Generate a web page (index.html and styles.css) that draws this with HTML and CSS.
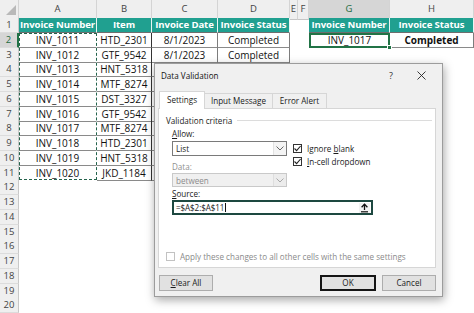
FILE: index.html
```html
<!DOCTYPE html>
<html>
<head>
<meta charset="utf-8">
<link rel="stylesheet" href="styles.css">
</head>
<body>
<div class="sheet">
  <div class="row colhead">
    <div class="corner"><svg width="19" height="18" viewBox="0 0 19 18"><polygon points="16,5 16,15 6,15" fill="#b9b9b9"/></svg></div>
    <div class="ch">A</div><div class="ch">B</div><div class="ch">C</div><div class="ch">D</div><div class="ch">E</div><div class="ch">F</div><div class="ch sel">G</div><div class="ch">H</div>
  </div>
  <div class="row">
    <div class="rh">1</div>
    <div class="c hd">Invoice Number</div><div class="c hd">Item</div><div class="c hd">Invoice Date</div><div class="c hd">Invoice Status</div>
    <div class="e"></div><div class="e"></div>
    <div class="c hd">Invoice Number</div><div class="c hd">Invoice Status</div>
  </div>
  <div class="row">
    <div class="rh sel">2</div>
    <div class="c a">INV_1011</div><div class="c b">HTD_2301</div><div class="c">8/1/2023</div><div class="c">Completed</div>
    <div class="e"></div><div class="e"></div>
    <div class="c active">INV_1017<span class="handle"></span></div><div class="c strong">Completed</div>
  </div>
  <div class="row">
    <div class="rh">3</div>
    <div class="c a">INV_1012</div><div class="c b">GTF_9542</div><div class="c">8/1/2023</div><div class="c">Completed</div>
  </div>
  <div class="row"><div class="rh">4</div><div class="c a">INV_1013</div><div class="c b">HNT_5318</div><div class="c"></div><div class="c"></div></div>
  <div class="row"><div class="rh">5</div><div class="c a">INV_1014</div><div class="c b">MTF_8274</div><div class="c"></div><div class="c"></div></div>
  <div class="row"><div class="rh">6</div><div class="c a">INV_1015</div><div class="c b">DST_3327</div><div class="c"></div><div class="c"></div></div>
  <div class="row"><div class="rh">7</div><div class="c a">INV_1016</div><div class="c b">GTF_9542</div><div class="c"></div><div class="c"></div></div>
  <div class="row"><div class="rh">8</div><div class="c a">INV_1017</div><div class="c b">MTF_8274</div><div class="c"></div><div class="c"></div></div>
  <div class="row"><div class="rh">9</div><div class="c a">INV_1018</div><div class="c b">HTD_2301</div><div class="c"></div><div class="c"></div></div>
  <div class="row"><div class="rh">10</div><div class="c a">INV_1019</div><div class="c b">HNT_5318</div><div class="c"></div><div class="c"></div></div>
  <div class="row"><div class="rh">11</div><div class="c a last">INV_1020</div><div class="c b">JKD_1184</div><div class="c"></div><div class="c"></div></div>
  <div class="row"><div class="rh">12</div></div>
  <div class="row"><div class="rh">13</div></div>
  <div class="row"><div class="rh">14</div></div>
  <div class="row"><div class="rh">15</div></div>
  <div class="row"><div class="rh">16</div></div>
  <div class="row"><div class="rh">17</div></div>
  <div class="row"><div class="rh">18</div></div>
  <div class="row"><div class="rh">19</div></div>
  <div class="row"><div class="rh">20</div></div>
</div>
<div class="ants"></div>

<div class="dlg">
  <div class="titlebar">
    <span class="title">Data Validation</span>
    <span class="help">?</span>
    <span class="close"><svg width="9" height="9" viewBox="0 0 9 9"><path d="M0.5 0.5L8.5 8.5M8.5 0.5L0.5 8.5" stroke="#222" stroke-width="0.9"/></svg></span>
  </div>
  <div class="tabs">
    <div class="tab active t1">Settings</div>
    <div class="tab t2">Input Message</div>
    <div class="tab t3">Error Alert</div>
  </div>
  <div class="panel">
    <div class="legend"><span>Validation criteria</span><div class="rule"></div></div>
    <div class="criteria">
      <div class="leftcol">
        <div class="lbl"><u>A</u>llow:</div>
        <div class="select"><span>List</span><span class="arrow"><svg width="8" height="5" viewBox="0 0 8 5"><path d="M0.5 0.5L4 4L7.5 0.5" fill="none" stroke="#666" stroke-width="1"/></svg></span></div>
        <div class="lbl dim gap">Data:</div>
        <div class="select disabled"><span>between</span><span class="arrow"><svg width="8" height="5" viewBox="0 0 8 5"><path d="M0.5 0.5L4 4L7.5 0.5" fill="none" stroke="#a8a8a8" stroke-width="1"/></svg></span></div>
      </div>
      <div class="checks">
        <div class="check"><span class="box"><svg width="9" height="9" viewBox="0 0 9 9"><path d="M1.5 4.5L3.6 6.6L7.6 2" fill="none" stroke="#222" stroke-width="1.1"/></svg></span><span>Ignore <u>b</u>lank</span></div>
        <div class="check"><span class="box"><svg width="9" height="9" viewBox="0 0 9 9"><path d="M1.5 4.5L3.6 6.6L7.6 2" fill="none" stroke="#222" stroke-width="1.1"/></svg></span><span><u>I</u>n-cell dropdown</span></div>
      </div>
    </div>
    <div class="lbl src-lbl"><u>S</u>ource:</div>
    <div class="source"><span class="val">=$A$2:$A$11</span><span class="caret"></span><span class="collapse"><svg width="9" height="10" viewBox="0 0 9 10"><path d="M4.5 1.2L4.5 7" stroke="#111" stroke-width="1.3"/><path d="M1.6 4.2L4.5 1.2L7.4 4.2" fill="none" stroke="#111" stroke-width="1.3"/><path d="M1 8.8L8 8.8" stroke="#111" stroke-width="1.2"/></svg></span></div>
    <div class="apply"><span class="box off"></span><span>Apply these changes to all other cells with the same settings</span></div>
  </div>
  <div class="buttons">
    <div class="btn"><u>C</u>lear All</div>
    <div class="btn ok">OK</div>
    <div class="btn">Cancel</div>
  </div>
</div>
</body>
</html>
```

FILE: styles.css
```css
* { box-sizing: border-box; margin: 0; padding: 0; }
html, body { width: 474px; height: 313px; overflow: hidden; background: #fff; }
body { font-family: "Open Sans", "Noto Sans", sans-serif; color: #111; }

.sheet { display: flex; flex-direction: column; }
.row {
  display: grid;
  grid-template-columns: 19px 78px 55px 66px 72px 8px 11px 81px 84px;
  height: 14.75px;
}
.row.colhead { height: 18px; }

.corner { background: #efefef; border-right: 1px solid #d4d4d4; border-bottom: 1px solid #c6c6c6; }
.corner svg { display: block; }
.ch {
  background: #efefef; border-right: 1px solid #d4d4d4; border-bottom: 1px solid #c6c6c6;
  font-size: 9.5px; color: #444; text-align: center; line-height: 18px;
}
.ch.sel { background: #d6d6d6; color: #1d6b41; border-bottom: 2px solid #217346; }

.rh {
  background: #efefef; border-right: 1px solid #c8c8c8; border-bottom: 1px solid #dcdcdc;
  font-size: 9.5px; color: #444; text-align: center; line-height: 14px;
}
.rh.sel { background: #d6d6d6; color: #1d6b41; border-right: 2px solid #217346; }

.c {
  border-right: 1px solid #7d7d7d; border-bottom: 1px solid #8a8a8a;
  font-size: 10px; text-align: center; line-height: 14px; white-space: nowrap; overflow: hidden;
  color: #111;
}
.c.a { border-right-color: transparent; }
.c.a.last { border-bottom-color: transparent; }
.c.b { border-right-color: #333; }
.c.hd {
  background: #20a090; color: #fff; font-weight: 700; font-size: 9.6px;
  border-right: 1px solid #e8f5f3; border-bottom: 1px solid #6e6e6e; letter-spacing: -0.1px;
}
.c.strong { font-weight: 700; }
.c.active { border: 2px solid #217346; line-height: 11px; position: relative; overflow: visible; }
.handle {
  position: absolute; right: -4px; bottom: -4px; width: 5px; height: 5px;
  background: #217346; border: 1px solid #fff;
}

.ants {
  position: absolute; left: 19px; top: 32.75px; width: 78px; height: 147.5px;
  border: 1px dashed #24634c;
}

/* dialog */
.dlg {
  position: absolute; left: 154px; top: 63px; width: 289px; height: 234px;
  background: #f0f0f0; border: 1px solid #9c9c9c;
  box-shadow: 1px 3px 9px rgba(0,0,0,0.35);
  padding: 0 6px 0 3px;
  display: flex; flex-direction: column;
  font-family: "Open Sans", "Noto Sans", sans-serif; font-size: 8.1px; color: #1a1a1a;
}
.titlebar { height: 26px; display: flex; align-items: center; padding: 0 0 3px 3px; }
.title { font-size: 8.1px; color: #111; }
.help { margin-left: auto; font-size: 9px; color: #333; width: 10px; text-align: center; }
.close { width: 9px; height: 9px; margin: 0 10px 0 21px; display: flex; }

.tabs { display: flex; align-items: flex-end; height: 18px; padding-left: 1px; }
.tab {
  height: 15px; border: 1px solid #d6d6d6; border-bottom: none; margin-right: -1px;
  text-align: center; line-height: 13px; color: #1a1a1a;
}
.tab.active { height: 18px; background: #fff; line-height: 16px; margin-bottom: -1px; position: relative; z-index: 1; }
.t1 { width: 46px; }
.t2 { width: 69px; }
.t3 { width: 55px; }

.panel {
  height: 160px; background: #fff; border: 1px solid #d6d6d6;
  padding: 6px 3px 0 7px;
}
.legend { display: flex; align-items: center; height: 11px; line-height: 11px; }
.rule { flex: 1; height: 1px; background: #dcdcdc; margin-left: 5px; }

.criteria { display: flex; margin-left: 6px; margin-top: 2px; }
.leftcol { width: 115px; }
.lbl { line-height: 11px; height: 11px; }
.lbl.dim { color: #8f8f8f; }
.lbl.gap { margin-top: 5px; }
.select {
  margin-top: 2px; height: 15px; border: 1px solid #7a7a7a; background: #fff;
  display: flex; align-items: center; padding-left: 3px; line-height: 13px;
}
.select .arrow {
  margin-left: auto; width: 13px; height: 13px; display: flex; align-items: center; justify-content: center;
  background: #f4f4f4; border-left: 1px solid #e2e2e2;
}
.select.disabled { margin-top: 1px; height: 14px; background: #f0f0f0; border-color: #c9c9c9; color: #8c8c8c; }
.select.disabled .arrow { height: 12px; background: #ececec; border-left-color: #dedede; }

.checks { margin-left: 6px; padding-top: 14px; }
.check { display: flex; align-items: center; height: 13px; }
.box {
  width: 9px; height: 9px; border: 1px solid #333; background: #fff; margin-right: 5px;
  display: flex; flex: none;
}
.box svg { display: block; margin: -1px; }
.box.off { border-color: #c2c2c2; }

.src-lbl { margin-left: 6px; margin-top: 1px; }
.source {
  margin: 1px 0 0 6px; width: 201px; height: 15px; border: 2px solid #1d4840;
  display: flex; align-items: center; padding-left: 2px; background: #fff;
}
.val { letter-spacing: -0.1px; }
.caret { width: 1px; height: 9px; background: #111; margin-left: 1px; }
.collapse {
  margin-left: auto; margin-right: 1px; width: 11px; height: 10px;
  display: flex; align-items: center; justify-content: center; background: #f2f2f2;
}

.apply { display: flex; align-items: center; margin-top: 36px; height: 10px; color: #8a8a8a; }

.buttons { display: flex; margin-top: 7px; padding-left: 1px; }
.btn {
  width: 54px; height: 16px; border: 1px solid #adadad; background: #e1e1e1;
  text-align: center; line-height: 14px; color: #1a1a1a;
}
.btn.ok { margin-left: auto; width: 56px; border: 2px solid #151515; line-height: 12px; margin-right: 6px; }
```
